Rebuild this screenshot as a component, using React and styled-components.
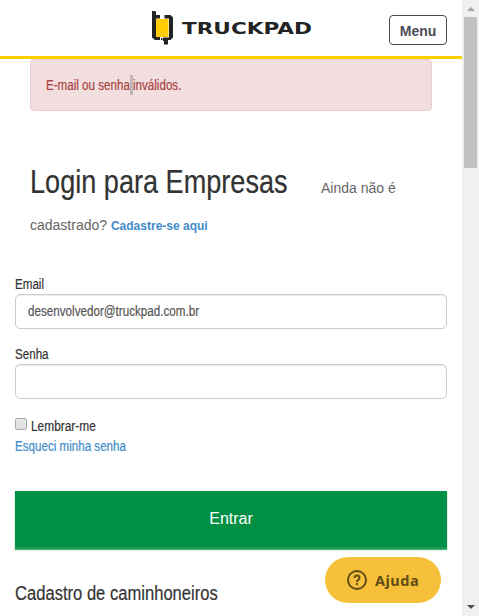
import React from 'react';
import styled, { createGlobalStyle } from 'styled-components';

const Global = createGlobalStyle`
  * { box-sizing: border-box; }
  html, body { margin: 0; overflow: hidden; background: #fff; }
  button, input { font: inherit; }
`;
const Page = styled.div`
  display: grid; grid-template-columns: 462px 17px; width: 479px; height: 616px;
  overflow: hidden; font-family: "Liberation Sans", Arial, sans-serif; color: #333;
`;
const Content = styled.div`height: 616px; overflow: hidden; background: #fff;`;
const Header = styled.header`
  height: 59px; border-bottom: 3px solid #ffce00;
  display: grid; grid-template-columns: 151px 1fr auto; align-items: start; padding-right: 15px;
`;
const Logo = styled.svg`grid-column: 2; margin-top: 10px; display: block;`;
const MenuButton = styled.button`
  width: 58px; height: 30px; margin-top: 15px; padding: 1px 0 0; background: #fff;
  border: 1px solid #494c57; border-radius: 4px; color: #494c57;
  font: bold 14px/28px "Liberation Sans", sans-serif;
`;
const Condensed = styled.span`
  display: inline-block; white-space: nowrap; width: ${p => p.$width ? p.$width + 'px' : 'auto'};
  transform: scaleX(${p => p.$scale || 0.829}); transform-origin: left center;
  -webkit-text-stroke: .2px currentColor;
`;
const Alert = styled.div`
  width: 402px; height: 52px; margin-left: 30px; padding: 0 15px;
  background: #f2dede; border: 1px solid #ebccd1; border-radius: 4px;
  color: #a94442; font-size: 14px; line-height: 51px; display: flex; align-items: center;
`;
const Caret = styled.i`width: 3px; height: 20px; background: #c1b6b8; margin-top: -1px;`;
const Intro = styled.section`margin: 51px 30px 0; height: 76px; color: #666; font-size: 14px;`;
const TitleRow = styled.div`display: flex; align-items: baseline; height: 42px; line-height: 40px;`;
const Title = styled.h1`margin: 0; width: 291px; font-size: 34px; line-height: 38px; font-weight: 400; color: #333;`;
const Register = styled.div`line-height: 43px;`;
const Link = styled.a`color: #428bca; text-decoration: none; font-weight: ${p => p.$bold ? 700 : 400}; font-size: ${p => p.$bold ? 12 : 14}px;`;
const Form = styled.form`margin: 37px 15px 0; font-size: 14px;`;
const Field = styled.div`height: 70px;`;
const Label = styled.label`display: block; height: 18px; line-height: 18px;`;
const Input = styled.div`
  margin-top: 1px; height: 35px; width: 432px; border: 1px solid #ccc; border-radius: 5px;
  padding-left: 12px; line-height: 33px; color: #555; box-shadow: inset 0 1px 1px rgba(0,0,0,.075);
`;
const Remember = styled.label`display: flex; gap: 4px; height: 20px; line-height: 20px; margin-top: 1px;`;
const Check = styled.span`
  width: 12px; height: 12px; margin-top: 2px; border: 1px solid #aaa; border-radius: 2px;
  background: linear-gradient(#e8e8e8, #dcdcdc);
`;
const Forgot = styled.div`height: 20px; line-height: 20px;`;
const Submit = styled.button`
  display: block; width: 432px; height: 58px; margin: 35px 0 0; padding: 0 0 1px; border: 0;
  border-bottom: 2px solid #219d5a; background: #009045; color: #fff; font-size: 16px;
  box-shadow: 0 1px 1px #4cb27a;
`;
const Subtitle = styled.h2`margin: 30px 15px 0; font-size: 20px; line-height: 28px; font-weight: 400; color: #333;`;
const Help = styled.button`
  position: fixed; left: 325px; top: 557px; width: 116px; height: 46px; border: 0; border-radius: 23px;
  padding: 0 0 0 22px; display: flex; align-items: center; gap: 8px;
  background: #f7c03a; color: #634d17; font: bold 14.5px "Noto Sans", sans-serif; letter-spacing: .5px;
`;
const Scrollbar = styled.aside`background: #f0f0f0; display: flex; flex-direction: column; align-items: center;`;
const Arrow = styled.svg`display: block; flex: none;`;
const Thumb = styled.div`width: 13px; height: 151px; background: #c1c1c1;`;
const Track = styled.div`flex: 1;`;

export default function App() {
  return <Page>
    <Global />
    <Content>
      <Header>
        <Logo width="164" height="36" viewBox="0 0 164 36">
          <path d="M5 9h12.5v18H5z" fill="#ffce00" />
          <path d="M1 1h3l1 1v3h4v3.5H5V27h4v3H4l-3-2.5zM13.5 5h6L22 7.5v20L19.5 30H17v4.5h-4V31h-1v-3.5h6V8.5h-4.5zM10 28h1.5v2H10z" fill="#222424" />
          <text x="31" y="24" fontFamily="DejaVu Sans" fontWeight="700" fontSize="16" textLength="130" lengthAdjust="spacingAndGlyphs" fill="#222424">TRUCKPAD</text>
        </Logo>
        <MenuButton>Menu</MenuButton>
      </Header>
      <Alert><Condensed $width={83.5}>E-mail ou senha</Condensed><Caret /><Condensed>inválidos.</Condensed></Alert>
      <Intro>
        <TitleRow><Title><Condensed $scale={0.797}>Login para Empresas</Condensed></Title><span>Ainda não é</span></TitleRow>
        <Register>cadastrado? <Link $bold>Cadastre-se aqui</Link></Register>
      </Intro>
      <Form>
        <Field><Label><Condensed>Email</Condensed></Label><Input><Condensed $scale={0.832}>desenvolvedor@truckpad.com.br</Condensed></Input></Field>
        <Field><Label><Condensed>Senha</Condensed></Label><Input /></Field>
        <Remember><Check /><Condensed $scale={0.85}>Lembrar-me</Condensed></Remember>
        <Forgot><Link><Condensed>Esqueci minha senha</Condensed></Link></Forgot>
        <Submit type="button">Entrar</Submit>
      </Form>
      <Subtitle><Condensed>Cadastro de caminhoneiros</Condensed></Subtitle>
    </Content>
    <Scrollbar>
      <Arrow width="17" height="17"><path d="M5 11l4-4 4 4z" fill="#a3a3a3" /></Arrow>
      <Thumb /><Track />
      <Arrow width="17" height="17"><path d="M5 6h8l-4 4z" fill="#505050" /></Arrow>
    </Scrollbar>
    <Help>
      <svg width="20" height="20" viewBox="0 0 20 20" fill="none" stroke="currentColor" strokeWidth="2"><circle cx="10" cy="10" r="9" /><path d="M7.5 8c0-3.2 5-3.2 5 0 0 2-2.5 1.8-2.5 4M10 13v2" /></svg>
      Ajuda
    </Help>
  </Page>;
}
